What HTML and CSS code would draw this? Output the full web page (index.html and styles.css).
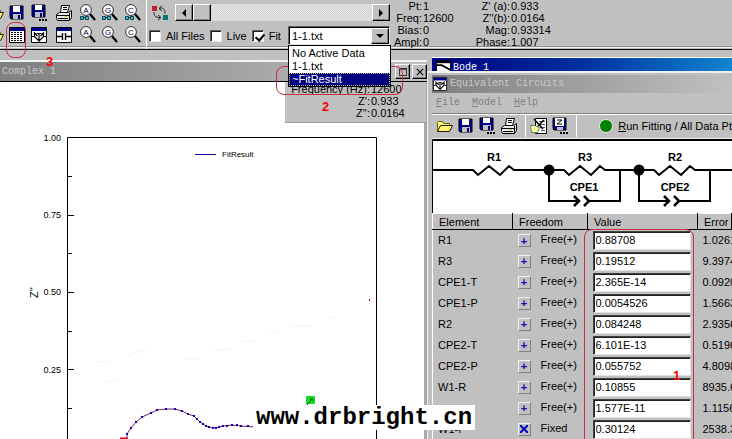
FILE: index.html
```html
<!DOCTYPE html>
<html lang="en">
<head>
<meta charset="utf-8">
<title>Impedance Analysis</title>
<link rel="stylesheet" href="styles.css">
</head>
<body>
<svg class="defs" aria-hidden="true">
  <symbol id="folder" viewBox="0 0 18 16"><path d="M1.5 13.500V4.500l1-1h4l1 2h6v2" fill="#ffff80" stroke="#606000"/><path d="M1.500 13.500l3-6h12l-3 6z" fill="#fff36b" stroke="#202000"/></symbol>
  <symbol id="disk" viewBox="0 0 18 18"><path d="M2 2h13v13H3l-1-1z" fill="#00008c" stroke="#000"/><path d="M5 2h7v6H5z" fill="#fff"/><path d="M5 10h8v5H5z" fill="#c0c0c0"/><path d="M10 11h2v4h-2z" fill="#000080"/></symbol>
  <symbol id="disk-as" viewBox="0 0 18 18"><path d="M2 1h13v12H3l-1-1z" fill="#00008c" stroke="#000"/><path d="M5 1h7v5H5z" fill="#fff"/><path d="M5 8h8v5H5z" fill="#c0c0c0"/><path d="M10 9h2v4h-2z" fill="#000080"/><path d="M9 15h2v2H9zM12 15h2v2h-2zM15 15h2v2h-2z"/></symbol>
  <symbol id="disk-z" viewBox="0 0 18 18"><path d="M2 1h13v12H3l-1-1z" fill="#00008c" stroke="#000"/><path d="M4 1h9v8H4z" fill="#fff"/><path d="M6 3h5L6 7h5" fill="none" stroke="#000"/><path d="M6 10h6v3H6z" fill="#c0c0c0"/><path d="M9 15h2v2H9zM12 15h2v2h-2zM15 15h2v2h-2z"/></symbol>
  <symbol id="printer" viewBox="0 0 18 18"><path d="M5.500 8.500l1-7h8l-2 7" fill="#fff" stroke="#000"/><path d="M8 3.500h4M8 5.500h4" stroke="#000"/><path d="M1.500 10.500l3-2h9l3-2v7l-2 3h-12l-1-2z" fill="#e8e8e8" stroke="#000"/><path d="M2 11.500h12M3 14.500h10M14.500 9v7" stroke="#000"/><path d="M10 12h2v1h-2z" fill="#d0c000"/></symbol>
  <symbol id="lens" viewBox="0 0 18 18"><circle cx="7" cy="6" r="5.400" fill="#fff" stroke="#333"/><path d="M11 10l5 6" stroke="#000" stroke-width="2.200"/></symbol>
  <symbol id="glasses" viewBox="0 0 18 18"><path d="M1.500 12.500h3v3h-3zM6.500 12.500h3v3h-3z" fill="#30c0c0" stroke="#004858"/><path d="M5 13.500h1" stroke="#000"/></symbol>
  <symbol id="grid" viewBox="0 0 18 18"><path d="M1.500 1.500h15v15h-15z" fill="#fff" stroke="#000"/><path d="M2 2h14v3H2z" fill="#000090"/><path d="M3 6.500h12M3 8.500h12M3 10.500h12M3 12.500h12M3 14.500h12" stroke="#000" stroke-dasharray="2 1"/></symbol>
  <symbol id="wave" viewBox="0 0 18 18"><path d="M1.500 1.500h15v15h-15z" fill="#fff" stroke="#000"/><path d="M2 2h14v3H2z" fill="#000090"/><path d="M2 10.500h2.500V7l3 3M4.500 10.500l4.500 4.500V7.500M6.500 7.500H9M16 10.500h-2.500V7l-3 3M13.500 10.500L9 15M9 7.500h2.500" fill="none" stroke="#000" stroke-width="1.200"/></symbol>
  <symbol id="cap" viewBox="0 0 18 18"><path d="M1.500 1.500h15v15h-15z" fill="#fff" stroke="#000"/><path d="M2 2h14v3H2z" fill="#000090"/><path d="M2 10.500h5.500M7.500 7v7M10.500 7v7M10.500 10.500H16" fill="none" stroke="#000" stroke-width="1.400"/></symbol>
  <symbol id="edit" viewBox="0 0 18 18"><path d="M5.500 1.500h11v15h-11z" fill="#fff" stroke="#000"/><path d="M9 4.500h6M9 7.500h6M10 10.500h5M11 13.500h4" stroke="#555"/><path d="M4 2l9 10M14 3L6 11" stroke="#000" stroke-width="1.500"/><path d="M.5 8.500h4l5 2-2 5h-6z" fill="#ffff90" stroke="#508080"/></symbol>
  <symbol id="swap" viewBox="0 0 18 18"><path d="M1 2h5v5H1z" fill="#c02028"/><path d="M12 11h5v5h-5z" fill="#007878"/><path d="M8 4.500c4-1 6 0 6 5M11 2L8 4.500 11 7M3 8c0 4 1 5.500 6 5.500M7 11l3 2.500L7 16" fill="none" stroke="#222"/></symbol>
</svg>

<header class="toolbar">
  <div class="tools">
    <button class="cut" aria-label="Open data"><svg><use href="#folder"/></svg></button>
    <button aria-label="Save"><svg><use href="#disk"/></svg></button>
    <button aria-label="Save as"><svg><use href="#disk-as"/></svg></button>
    <button aria-label="Print"><svg><use href="#printer"/></svg></button>
    <button aria-label="Zoom all sets"><svg><use href="#lens"/><use href="#glasses"/><text x="7" y="9">A</text></svg></button>
    <button aria-label="Zoom group sets"><svg><use href="#lens"/><use href="#glasses"/><text x="7" y="9">G</text></svg></button>
    <button aria-label="Zoom current set"><svg><use href="#lens"/><use href="#glasses"/><text x="7" y="9">C</text></svg></button>
    <button class="cut" aria-label="Open model"><svg><use href="#folder"/></svg></button>
    <button aria-label="Data table"><svg><use href="#grid"/></svg></button>
    <button aria-label="Equivalent circuits"><svg><use href="#wave"/></svg></button>
    <button aria-label="Instant fit"><svg><use href="#cap"/></svg></button>
    <button aria-label="Zoom all"><svg><use href="#lens"/><text x="7" y="9">A</text></svg></button>
    <button aria-label="Zoom group"><svg><use href="#lens"/><text x="7" y="9">G</text></svg></button>
    <button aria-label="Zoom current"><svg><use href="#lens"/><text x="7" y="9">C</text></svg></button>
  </div>
  <div class="source">
    <div class="scrub">
      <button class="swap" aria-label="Swap data"><svg><use href="#swap"/></svg></button>
      <div class="scroll">
        <button class="raised" aria-label="Previous point"><svg viewBox="0 0 8 8"><path d="M6 0v8L2 4z"/></svg></button>
        <input type="range" aria-label="Data point" min="0" max="100" value="0">
        <button class="raised" aria-label="Next point"><svg viewBox="0 0 8 8"><path d="M2 0v8l4-4z"/></svg></button>
      </div>
    </div>
    <div class="filters">
      <label><input type="checkbox">All Files</label>
      <label><input type="checkbox">Live</label>
      <label><input type="checkbox" checked>Fit</label>
      <div class="combo">
        <select aria-label="Active data"><option>1-1.txt</option></select>
        <span class="raised drop"><svg viewBox="0 0 8 8"><path d="M0 2h8L4 6z"/></svg></span>
        <ul class="choices">
          <li>No Active Data</li>
          <li>1-1.txt</li>
          <li class="chosen">~FitResult</li>
        </ul>
      </div>
    </div>
  </div>
  <dl class="readout">
    <dt>Pt:</dt><dd>1</dd>
    <dt>Freq:</dt><dd>12600</dd>
    <dt>Bias:</dt><dd>0</dd>
    <dt>Ampl:</dt><dd>0</dd>
  </dl>
  <dl class="readout wide">
    <dt>Z' (a):</dt><dd>0.933</dd>
    <dt>Z''(b):</dt><dd>0.0164</dd>
    <dt>Mag:</dt><dd>0.93314</dd>
    <dt>Phase:</dt><dd>1.007</dd>
  </dl>
</header>

<main class="desktop">
  <section class="complex">
    <div class="titlebar">
      <h1>Complex 1</h1>
      <button class="raised" aria-label="Maximize"><svg viewBox="0 0 10 10"><path d="M.5 1.500h9v8h-9zM0 .5h10" fill="none" stroke="#000"/></svg></button>
      <button class="raised" aria-label="Close"><svg viewBox="0 0 10 10"><path d="M1 1l8 8M9 1L1 9" stroke="#000" stroke-width="1.500"/></svg></button>
    </div>
    <svg class="plot" viewBox="0 82 424 357" preserveAspectRatio="xMinYMin meet">
      <path class="axis" d="M67.500 460V137.500h309V460M67 215.500h7M67 292.500h7M67 369.500h7M67 176.500h5M67 253.500h5M67 331.500h5M67 408.500h5"/>
      <g class="ticks"><text x="61" y="141">1.00</text><text x="61" y="218">0.75</text><text x="61" y="295">0.50</text><text x="61" y="373">0.25</text></g>
      <text class="ylabel" transform="translate(38 298) rotate(-90)">Z''</text>
      <path d="M195 154.500h21" stroke="#2000a0"/>
      <text class="legend" x="222" y="157">FitResult</text>
      <path class="noise" d="M96 362l14-1M105 382l14-2M128 355l20-6M184 359h16M214 351l18-3M243 342l14-2M270 334l10-3M291 326h20M328 318l8-1"/>
      <path class="fit" d="M121 438.500h6l0-4.500 4-6 5-6 6-5 9-4 6-3 9-1h9l7 2 6 3 6 2 3 3 3 3 6 4 3 1 4 1 6-1 4-1 9-1 8 1 15 1"/>
      <path class="points" d="M126 434h2M130 428h2M135 422h2M141 417h2M150 413h2M156 410h2M165 409h2M174 409h2M181 411h2M187 414h2M193 416h2M196 419h2M199 422h2M202 424h2M205 426h2M208 427h2M212 428h2M215 428h2M218 427h2M222 426h2M226 426h2M231 425h2M236 425h2M240 426h2M247 426h2M254 427h2"/>
      <path d="M120 438.500h8" stroke="#e00020" stroke-width="2"/>
      <path d="M306 396h9v8h-9z" fill="#10e020"/><path d="M307 405l5-6M310 399h3v2" fill="none" stroke="#205020"/>
      <path d="M369 299h1v2h-1z" fill="#b00020"/>
    </svg>
    <dl class="readout cursor">
      <dt>Frequency (Hz):</dt><dd>12600</dd>
      <dt>Z':</dt><dd>0.933</dd>
      <dt>Z'':</dt><dd>0.0164</dd>
    </dl>
  </section>

  <section class="side">
    <div class="bode"><svg viewBox="0 0 16 12"><path d="M0 0h16v12H0z"/><path d="M1 3h14v9H1z" fill="#fff"/><path d="M1 5h5l9 5" fill="none" stroke="#000" stroke-width="2"/></svg><h2>Bode 1</h2></div>
    <div class="circuits">
      <div class="titlebar"><svg><use href="#wave"/></svg><h2>Equivalent Circuits</h2></div>
      <nav><a href="#file"><u>F</u>ile</a><a href="#model"><u>M</u>odel</a><a href="#help"><u>H</u>elp</a></nav>
      <div class="actions">
        <button aria-label="Open"><svg><use href="#folder"/></svg></button>
        <button aria-label="Save model"><svg><use href="#disk"/></svg></button>
        <button aria-label="Save model as"><svg><use href="#disk-as"/></svg></button>
        <button aria-label="Print model"><svg><use href="#printer"/></svg></button>
        <i></i>
        <button aria-label="Edit"><svg><use href="#edit"/></svg></button>
        <button aria-label="Save results"><svg><use href="#disk-z"/></svg></button>
        <i></i>
        <button class="run"><b></b><span><u>R</u>un Fitting / All Data Pt</span></button>
      </div>
      <div class="diagram">
        <svg viewBox="0 0 302 70" preserveAspectRatio="xMinYMin slice">
          <g fill="none" stroke="#000" stroke-width="2">
            <path d="M0 29h40l5 5 11-9 11 9 9-9 5 4h50l5 5 11-9 11 9 9-9 5 4h49l5 5 11-9 11 9 9-9 5 4h46"/>
            <path d="M116 29v31h30M157 60h30V29M206 29v31h30M247 60h30V29"/>
            <path d="M141 55l5 5-5 5M151 55l5 5-5 5M231 55l5 5-5 5M241 55l5 5-5 5" stroke-width="2.500"/>
          </g>
          <circle cx="116" cy="29" r="5.500"/><circle cx="206" cy="29" r="5.500"/>
          <text x="61" y="20">R1</text><text x="152" y="20">R3</text><text x="242" y="20">R2</text>
          <text x="151" y="50">CPE1</text><text x="242" y="50">CPE2</text>
        </svg>
      </div>
      <table>
        <colgroup><col class="c1"><col class="c2"><col class="c3"><col></colgroup>
        <thead><tr><th>Element</th><th>Freedom</th><th>Value</th><th>Error</th></tr></thead>
        <tbody>
          <tr><td>R1</td><td><button>+</button>Free(+)</td><td><input aria-label="R1" value="0.88708"></td><td>1.0261</td></tr>
          <tr><td>R3</td><td><button>+</button>Free(+)</td><td><input aria-label="R3" value="0.19512"></td><td>9.3974</td></tr>
          <tr><td>CPE1-T</td><td><button>+</button>Free(+)</td><td><input aria-label="CPE1-T" value="2.365E-14"></td><td>0.0920</td></tr>
          <tr><td>CPE1-P</td><td><button>+</button>Free(+)</td><td><input aria-label="CPE1-P" value="0.0054526"></td><td>1.5663</td></tr>
          <tr><td>R2</td><td><button>+</button>Free(+)</td><td><input aria-label="R2" value="0.084248"></td><td>2.9356</td></tr>
          <tr><td>CPE2-T</td><td><button>+</button>Free(+)</td><td><input aria-label="CPE2-T" value="6.101E-13"></td><td>0.5196</td></tr>
          <tr><td>CPE2-P</td><td><button>+</button>Free(+)</td><td><input aria-label="CPE2-P" value="0.055752"></td><td>4.8098</td></tr>
          <tr><td>W1-R</td><td><button>+</button>Free(+)</td><td><input aria-label="W1-R" value="0.10855"></td><td>8935.6</td></tr>
          <tr><td></td><td><button>+</button>Free(+)</td><td><input aria-label="W1-T" value="1.577E-11"></td><td>1.1156</td></tr>
          <tr><td>W1-P</td><td><button class="fixed" aria-label="Fixed"><svg viewBox="0 0 8 8"><path d="M0 0l8 8M8 0L0 8"/></svg></button>Fixed</td><td><input aria-label="W1-P" value="0.30124"></td><td>2538.3</td></tr>
        </tbody>
      </table>
      <div class="mark values"><span>1</span></div>
    </div>
  </section>
</main>
<div class="mark result"><span>2</span></div>
<div class="mark tool"><span>3</span></div>
<div class="watermark">www.drbright.cn</div>
</body>
</html>
```
FILE: styles.css
```css
* { box-sizing: border-box; }
body {
  margin: 0;
  height: 100vh;
  display: flex;
  flex-direction: column;
  position: relative;
  overflow: hidden;
  background: #c0c0c0;
  color: #000;
  font: 11px/12px "Liberation Sans", Arial, sans-serif;
}
.defs { position: absolute; width: 0; height: 0; }
button, input, select { font: inherit; color: inherit; margin: 0; padding: 0; border: 0; border-radius: 0; background: none; }
h1, h2, dl, dd, ul { margin: 0; padding: 0; }
h1, h2, nav { font: 10px/16px "Liberation Mono", monospace; }
a { color: inherit; text-decoration: none; }

.raised {
  display: grid;
  place-items: center;
  width: 18px;
  height: 17px;
  background: #c0c0c0;
  border: 1px solid;
  border-color: #fff #000 #000 #fff;
  box-shadow: inset -1px -1px #808080;
}
.raised svg { width: 8px; height: 8px; }

.toolbar {
  display: flex;
  flex: none;
  height: 50px;
  border-bottom: 1px solid #000;
  box-shadow: inset 0 -1px #c0c0c0, inset 0 -2px #f0f0f0, inset 0 -3px #909090;
}
.tools {
  display: grid;
  grid-template-columns: 8px 22px 25px 24px 22px 23px 22px;
  grid-template-rows: 22px 22px;
  padding-top: 2px;
  border-right: 1px solid #fff;
}
.tools button svg, .swap svg, .actions button svg { display: block; width: 18px; height: 18px; }
.tools .cut { overflow: hidden; width: 5px; }
.tools .cut svg { margin-left: -13px; }
.tools text { font-size: 8px; fill: #000040; text-anchor: middle; }
.source { padding: 4px 0 0 2px; }
.scrub { display: flex; height: 22px; }
.swap { width: 26px; height: 18px; padding-left: 2px; }
.scroll { display: flex; }
.scroll input {
  appearance: none;
  width: 179px;
  height: 17px;
  background: repeating-conic-gradient(#d0d0d0 0 25%, #e8e8e8 0 50%) 0 0 / 2px 2px;
}
.scroll input::-webkit-slider-thumb {
  appearance: none;
  width: 18px;
  height: 17px;
  background: #c0c0c0;
  border: 1px solid;
  border-color: #fff #000 #000 #fff;
  box-shadow: inset -1px -1px #808080;
}
.filters { display: flex; align-items: center; height: 19px; gap: 5px; }
.filters label { display: flex; align-items: center; gap: 5px; }
.filters label input {
  appearance: none;
  width: 12px;
  height: 12px;
  background: #fff;
  border: 1px solid;
  border-color: #606060 #e8e8e8 #e8e8e8 #606060;
  box-shadow: inset 1px 1px #202020;
}
.filters label input:checked::after {
  content: "";
  display: block;
  width: 4px;
  height: 7px;
  margin: 1px 0 0 4px;
  border: solid #000;
  border-width: 0 2px 2px 0;
  transform: rotate(40deg);
}
.combo { position: relative; display: flex; width: 102px; height: 19px; margin-left: auto; background: #fff; border: 1px solid; border-color: #606060 #e0e0e0 #e0e0e0 #606060; box-shadow: inset 1px 1px #000; }
.combo select { appearance: none; flex: 1; padding-left: 3px; }
.combo .drop { pointer-events: none; margin-top: 1px; height: 16px; }
.choices { position: absolute; z-index: 5; top: 18px; left: -1px; width: 103px; padding-top: 1px; list-style: none; background: #fff; border: 1px solid #000; }
.choices li { height: 13px; padding-left: 3px; line-height: 13px; }
.choices .chosen { background: #000080; color: #fff; outline: 1px dotted #c0c060; outline-offset: -1px; }

.readout { display: grid; grid-template-columns: 1fr 1fr; grid-auto-rows: 12px; column-gap: 1px; align-content: start; text-align: right; }
.readout dd { text-align: left; }
.toolbar .readout { grid-template-columns: 32px 32px; }
.toolbar .wide { grid-template-columns: 55px 60px; }

.desktop { flex: 1; min-height: 0; display: grid; grid-template-columns: 7fr 5fr; padding-top: 7px; }
.complex { position: relative; margin-top: 3px; border-top: 2px solid #f4f4f4; display: flex; flex-direction: column; min-width: 0; min-height: 0; }
.titlebar { display: flex; align-items: center; color: #c8c8c8; background: linear-gradient(90deg, #808080, #c0c0c0); }
.complex .titlebar { flex: none; height: 20px; padding-left: 2px; border-bottom: 1px solid #000; gap: 2px; }
.complex h1 { flex: 1; }
.complex .titlebar .raised { width: 15px; height: 15px; }
.plot { display: block; flex: 1; min-height: 0; width: 100%; background: #fff; border-right: 3px solid #a8a8a8; }
.axis { fill: none; stroke: #000; }
.ticks { font-size: 9px; text-anchor: end; }
.ylabel { font-size: 11px; }
.legend { font-size: 8px; }
.noise { fill: none; stroke: #f1f5f5; }
.fit { fill: none; stroke: #702060; }
.points { fill: none; stroke: #1800b0; stroke-width: 2; }
.cursor { position: absolute; right: 1px; top: 20px; width: 141px; height: 41px; padding-top: 1px; grid-template-columns: 85px 1fr; background: #c0c0c0; border-bottom: 1px solid #a0a0a0; }

.side { display: flex; flex-direction: column; min-width: 0; min-height: 0; }
.bode { display: flex; flex: none; height: 14px; margin-left: 5px; padding: 2px 0 0 4px; gap: 2px; overflow: hidden; color: #fff; border-top: 1px solid #fff; background: linear-gradient(90deg, #000080, #0030a0 50%, #1084d0); }
.bode svg { width: 15px; height: 12px; }
.circuits { position: relative; flex: 1; min-height: 0; overflow: hidden; padding-left: 4px; background: #c0c0c0; border: solid #f0f0f0; border-width: 2px 0 0 1px; }
.circuits .titlebar { height: 18px; margin-top: 2px; gap: 2px; }
.circuits .titlebar svg { width: 16px; height: 16px; }
nav { display: flex; gap: 12px; padding: 2px 4px 0; height: 20px; color: #808080; }
.actions { display: flex; align-items: center; height: 26px; padding-left: 4px; border-top: 1px solid #808080; border-bottom: 1px solid #f0f0f0; box-shadow: inset 0 1px #fff; }
.actions button { width: 22px; }
.actions i { width: 1px; height: 22px; margin: 0 4px; background: #fff; }
.actions .run { display: flex; align-items: center; flex: none; width: auto; gap: 5px; margin-left: 18px; white-space: nowrap; }
.run b { width: 14px; height: 14px; border-radius: 50%; background: #008000; border: 1px solid #e0f0e0; }
.diagram { height: 74px; background: #fff; border: solid #000; border-width: 2px 0 0 1px; }
.diagram svg { display: block; width: 100%; height: 70px; }
.diagram text { font-size: 11px; font-weight: bold; text-anchor: middle; }
table { width: 100%; table-layout: fixed; border-collapse: collapse; border-left: 1px solid #fff; }
.c1 { width: 80px; }
.c2 { width: 75px; }
.c3 { width: 110px; }
th { height: 16px; padding: 0 0 0 6px; font-weight: normal; text-align: left; border: solid; border-width: 1px 1px 1px 0; border-color: #fff #000 #000; }
td { height: 21px; padding: 0 0 0 5px; white-space: nowrap; overflow: hidden; }
td button { display: inline-grid; place-items: center; width: 13px; height: 13px; margin-right: 10px; vertical-align: middle; font-weight: bold; line-height: 10px; color: #2000b0; border: 1px solid; border-color: #f0f0f0 #808080 #808080 #f0f0f0; }
td button svg { width: 8px; height: 8px; fill: none; stroke: #0000c0; stroke-width: 2; }
td input { display: block; width: 98px; height: 19px; padding-left: 2px; background: #fff; border: 1px solid; border-color: #404040 #e0e0e0 #e0e0e0 #404040; box-shadow: inset 1px 1px #202020; }

.mark { position: absolute; border: 1px solid #c83040; border-radius: 8px; pointer-events: none; color: #f00; font-weight: bold; font-size: 13px; }
.mark span { position: absolute; }
.result { left: 276px; top: 66px; width: 127px; height: 29px; }
.result span { left: 45px; top: 34px; }
.tool { left: 6px; top: 22px; width: 20px; height: 36px; }
.tool span { left: 39px; top: 33px; }
.values { left: 156px; top: 156px; width: 110px; height: 240px; }
.values span { left: 88px; top: 140px; }
.watermark { position: absolute; left: 253px; bottom: 9px; padding: 0 3px; background: #fff; font: bold 24px/25px "Liberation Mono", monospace; }
```
